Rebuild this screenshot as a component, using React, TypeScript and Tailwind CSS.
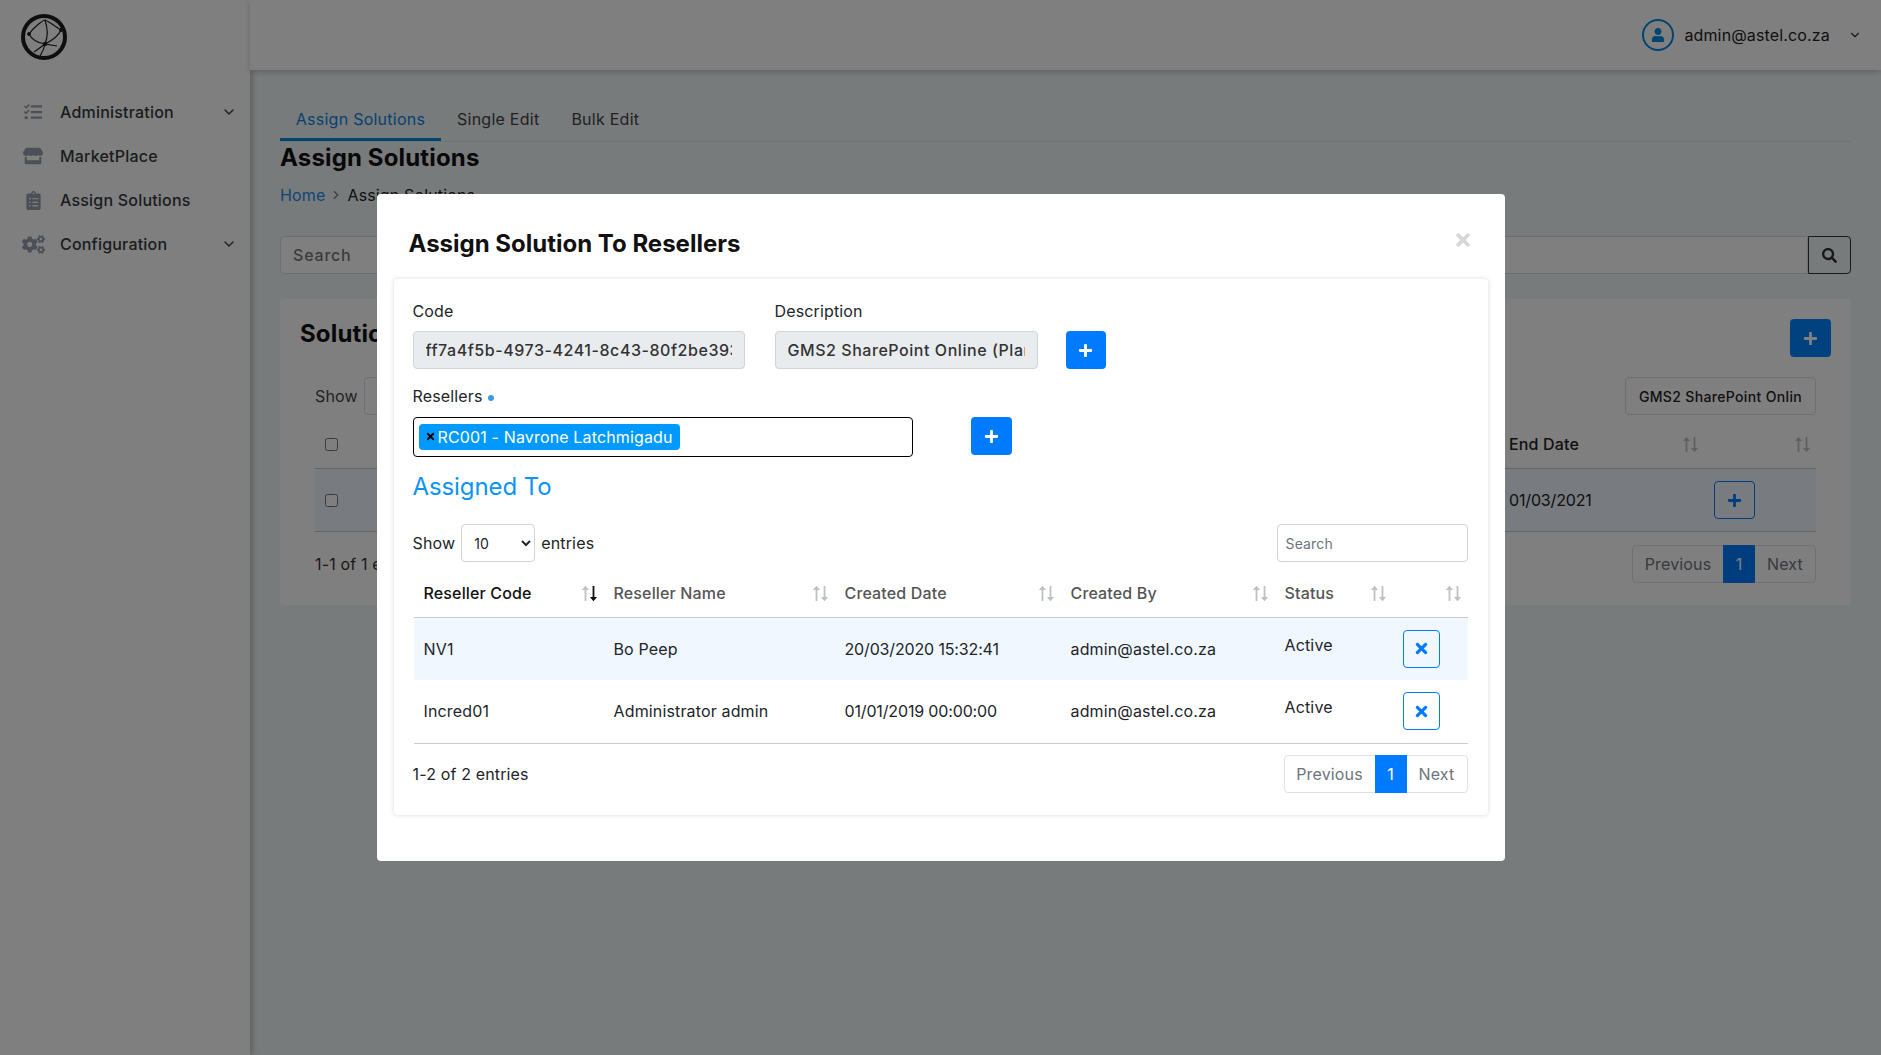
import { ChevronDown, ChevronRight } from 'lucide-react'
import { FaClipboardList, FaCogs, FaPlus, FaSearch, FaStore, FaTasks, FaTimes, FaUser } from 'react-icons/fa'

const navItems = [
  { label: 'Administration', icon: FaTasks, size: 'text-[18px]', caret: true },
  { label: 'MarketPlace', icon: FaStore, size: 'text-[20px]', caret: false },
  { label: 'Assign Solutions', icon: FaClipboardList, size: 'text-[19px]', caret: false },
  { label: 'Configuration', icon: FaCogs, size: 'text-[23px]', caret: true },
]

const rows = [
  { code: 'NV1', name: 'Bo Peep', date: '20/03/2020 15:32:41', by: 'admin@astel.co.za', status: 'Active', hl: true },
  { code: 'Incred01', name: 'Administrator admin', date: '01/01/2019 00:00:00', by: 'admin@astel.co.za', status: 'Active', hl: false },
]

const columns = [
  { label: 'Reseller Code', width: 'w-[190px]' },
  { label: 'Reseller Name', width: 'w-[231px]' },
  { label: 'Created Date', width: 'w-[226px]' },
  { label: 'Created By', width: 'w-[214px]' },
  { label: 'Status', width: 'w-[118px]' },
  { label: '', width: 'w-[75px]' },
]

function SortArrows({ active = false }: { active?: boolean }) {
  const down = active ? '#111' : '#bcc1c5'
  return (
    <svg width="17" height="17" viewBox="0 0 17 17" className="shrink-0">
      <path d="M3.6 16V5H.9L4.5 .8 8.100 5H5.400v11z" fill="#bcc1c5" />
      <path d="M11.600 1v11H8.900l3.600 4.200L16.100 12h-2.700V1z" fill={down} />
    </svg>
  )
}

function Logo() {
  return (
    <svg width="48" height="48" viewBox="0 0 48 48" fill="none" stroke="#1c1c1c">
      <circle cx="24" cy="24" r="21" strokeWidth="4" />
      <path d="M9 21 C 14 14, 22 8, 25 7 C 30 9, 36 14, 41 17 M25 7 C 28 16, 28 24, 25 31 M9 21 C 12 27, 18 30, 25 31 M25 31 C 31 28, 38 24, 41 17 M25 31 L37 33 M25 31 C 21 34, 17 37, 14 39 M25 31 C 24 36, 22 40, 20 43" strokeWidth="1.2" />
      <circle cx="25" cy="31" r="1.8" fill="#1c1c1c" />
      <circle cx="9" cy="21" r="1.4" fill="#1c1c1c" />
      <circle cx="41" cy="17" r="1.4" fill="#1c1c1c" />
    </svg>
  )
}

function Pager() {
  return (
    <div className="flex h-[38px] items-stretch rounded border border-[#dee2e6] text-[#6c757d]">
      <span className="flex w-[90px] items-center justify-center">Previous</span>
      <span className="-my-px flex w-[32px] items-center justify-center bg-[#007bff] text-white">1</span>
      <span className="flex w-[60px] items-center justify-center">Next</span>
    </div>
  )
}

function Background() {
  return (
    <div className="flex h-[1055px] w-[1881px] overflow-hidden bg-[#f1f6f7]">
      <aside className="w-[250px] shrink-0 bg-white shadow-[2px_0_6px_rgba(0,0,0,0.25)]">
        <div className="h-[90px] pl-[20px] pt-[13px]">
          <Logo />
        </div>
        <nav>
          {navItems.map((item) => (
            <div key={item.label} className="flex h-[44px] items-center pr-[13px] text-[#343a40]">
              <span className="flex w-[60px] justify-center pl-[18px] pr-[12px]">
                <item.icon className={`${item.size} shrink-0 text-[#94a1ad]`} />
              </span>
              <span className="flex-1 font-medium tracking-[0.2px]">{item.label}</span>
              {item.caret && <ChevronDown size={16} strokeWidth={2} className="text-[#343a40]" />}
            </div>
          ))}
        </nav>
      </aside>

      <div className="flex min-w-0 flex-1 flex-col">
        <header className="flex h-[70px] shrink-0 items-center justify-end bg-white pr-[19px] shadow-[0_2px_6px_rgba(0,0,0,0.2)]">
          <span className="flex h-[32px] w-[32px] items-center justify-center rounded-full border-2 border-[#0088e0] text-[#0088e0]">
            <FaUser className="text-[14px]" />
          </span>
          <span className="ml-[10px] text-[#222]">admin@astel.co.za</span>
          <ChevronDown size={14} className="ml-[18px] text-[#333]" />
        </header>

        <main className="pl-[30px] pr-[30px] pt-[30px]">
          <div className="flex h-[42px] border-b border-[#dfe4e8] tracking-[0.25px]">
            <span className="flex w-[161px] items-center justify-center border-b-[3px] border-[#0088e0] text-[#0b84e0]">Assign Solutions</span>
            <span className="ml-[16px] flex items-center pb-[3px] text-[#444]">Single Edit</span>
            <span className="ml-[32px] flex items-center pb-[3px] text-[#444]">Bulk Edit</span>
          </div>
          <h1 className="mt-[1px] text-[24px] font-bold leading-[30px] text-[#111]">Assign Solutions</h1>
          <div className="mt-[11px] flex items-center leading-[22px]">
            <span className="text-[#1a8cef]">Home</span>
            <ChevronRight size={14} className="mx-[4px] text-[#777]" />
            <span className="text-[#222]">Assign Solutions</span>
          </div>

          <div className="mt-[30px] flex h-[38px]">
            <div className="flex flex-1 items-center rounded-l border border-[#d8dde1] bg-white pl-[12px] font-medium tracking-[0.8px] text-[#777]">Search</div>
            <div className="flex w-[43px] items-center justify-center rounded-r border border-[#333] text-[#333]">
              <FaSearch className="text-[15px]" />
            </div>
          </div>

          <section className="mt-[25px] h-[306px] rounded bg-white px-[20px] pt-[20px]">
            <div className="flex h-[38px] items-start justify-between">
              <h2 className="-mt-px text-[24px] font-bold leading-[32px] text-[#111]">Solutions</h2>
              <span className="flex h-[38px] w-[41px] items-center justify-center rounded bg-[#0085ff] text-white">
                <FaPlus className="text-[15px]" />
              </span>
            </div>
            <div className="mt-[20px] flex h-[38px] items-center justify-between pl-[15px] pr-[15px] text-[#444]">
              <div className="flex items-center gap-[6px]">
                Show
                <span className="h-[38px] w-[60px] rounded border border-[#d8dde1]" />
              </div>
              <span className="flex h-[38px] w-[191px] items-center justify-center rounded border border-[#d8dde1] text-[14px] font-medium tracking-[0.35px] text-[#222]">GMS2 SharePoint Onlin</span>
            </div>
            <div className="ml-[15px] mr-[15px] flex h-[54px] items-center border-b border-[#c6ccd2] pl-[10px] pt-[5px]">
              <input type="checkbox" readOnly className="h-[13px] w-[13px]" />
              <span className="ml-[1171px] w-[173px] font-medium text-[#222]">End Date</span>
              <SortArrows />
              <span className="ml-[95px]">
                <SortArrows />
              </span>
            </div>
            <div className="ml-[15px] mr-[15px] flex h-[63px] items-center border-b border-[#c6ccd2] bg-[#f0f7ff] pl-[10px]">
              <input type="checkbox" readOnly className="h-[13px] w-[13px]" />
              <span className="ml-[1171px] w-[205px] tracking-[-0.15px] text-[#222]">01/03/2021</span>
              <span className="flex h-[38px] w-[41px] items-center justify-center rounded border border-[#007bff] text-[#007bff]">
                <FaPlus className="text-[15px]" />
              </span>
            </div>
            <div className="mt-[13px] flex items-center justify-between pl-[15px] pr-[15px]">
              <span className="text-[#333]">1-1 of 1 entries</span>
              <Pager />
            </div>
          </section>
        </main>
      </div>
    </div>
  )
}

function Modal() {
  return (
    <div className="fixed inset-0 bg-black/50">
      <div className="mx-auto mt-[194px] h-[667px] w-[1128px] rounded-[4px] bg-white pl-[17px] pr-[17px] text-[#212529]">
        <div className="flex h-[85px] items-start justify-between pl-[15px] pr-[15px] pt-[34px]">
          <h2 className="text-[24px] font-bold leading-[32px] tracking-normal text-[#111]">Assign Solution To Resellers</h2>
          <FaTimes className="mt-[2px] text-[20px] text-[#d5d7d9]" />
        </div>
        <div className="h-[536px] rounded-[4px] bg-white pl-[19px] pr-[20px] pt-[22px] shadow-[0_0_5px_rgba(0,0,0,0.15)]">
          <div className="flex items-end">
            <label className="w-[332px]">
              <span className="mb-[10px] block leading-[20px]">Code</span>
              <input disabled value="ff7a4f5b-4973-4241-8c43-80f2be393a1f" readOnly className="h-[38px] w-full rounded border border-[#ced4da] bg-[#e9ecef] px-[12px] font-medium tracking-[0.55px] text-[#333]" />
            </label>
            <label className="ml-[30px] w-[263px]">
              <span className="mb-[10px] block leading-[20px]">Description</span>
              <input disabled value="GMS2 SharePoint Online (Plan 2)" readOnly className="h-[38px] w-full rounded border border-[#ced4da] bg-[#e9ecef] px-[12px] font-medium tracking-[0.55px] text-[#333]" />
            </label>
            <button className="ml-[28px] flex h-[38px] w-[40px] items-center justify-center rounded bg-[#007bff] text-white">
              <FaPlus className="text-[15px]" />
            </button>
          </div>

          <div className="mt-[17px] flex items-center leading-[20px]">
            Resellers
            <span className="ml-[5px] mt-[3px] h-[6px] w-[6px] rounded-full bg-[#3a9be0]" />
          </div>
          <div className="mt-[11px] flex items-start">
            <div className="flex h-[40px] w-[500px] items-center rounded border border-black pb-[1px] pl-[5px]">
              <span className="flex h-[26px] items-center rounded bg-[#0099ff] pl-[6px] pr-[7px] text-white">
                <FaTimes className="mr-[2px] text-[11px] text-black" />
                RC001 - Navrone Latchmigadu
              </span>
            </div>
            <button className="ml-[58px] flex h-[38px] w-[41px] items-center justify-center rounded bg-[#007bff] text-white">
              <FaPlus className="text-[15px]" />
            </button>
          </div>

          <h3 className="mt-[14px] text-[24px] font-normal leading-[32px] tracking-[-0.1px] text-[#0b93f6]">Assigned To</h3>

          <div className="mt-[21px] flex h-[38px] items-center justify-between">
            <div className="flex items-center">
              Show
              <select className="ml-[6px] h-[38px] w-[74px] rounded border border-[#ced4da] bg-white pl-[8px] text-[14px]">
                <option>10</option>
              </select>
              <span className="ml-[6px]">entries</span>
            </div>
            <input placeholder="Search" className="h-[38px] w-[191px] rounded border border-[#ced4da] px-[8px] text-[14px] placeholder:text-[#6c757d]" />
          </div>

          <table className="ml-[1px] mt-[8px] w-[1054px] table-fixed border-collapse">
            <thead>
              <tr className="h-[47px] border-b border-[#c6ccd2]">
                {columns.map((col, i) => (
                  <th key={col.label} className={`${col.width} pl-[10px] pr-[6px] text-left font-medium ${i === 0 ? 'text-[#111]' : 'text-[#555]'}`}>
                    <span className="flex items-center justify-between">
                      {col.label}
                      {i === 5 && <span />}
                      <SortArrows active={i === 0} />
                    </span>
                  </th>
                ))}
              </tr>
            </thead>
            <tbody>
              {rows.map((row) => (
                <tr key={row.code} className={`h-[63px] ${row.hl ? 'bg-[#f0f7ff]' : 'border-b border-[#c6ccd2]'}`}>
                  <td className="px-[10px]">{row.code}</td>
                  <td className="px-[10px]">{row.name}</td>
                  <td className="px-[10px] tracking-[-0.15px]">{row.date}</td>
                  <td className="px-[10px]">{row.by}</td>
                  <td className="px-[10px] pb-[8px]">{row.status}</td>
                  <td className="px-[10px]">
                    <button className="flex h-[38px] w-[37px] items-center justify-center rounded border border-[#007bff] text-[#007bff]">
                      <FaTimes className="text-[17px]" />
                    </button>
                  </td>
                </tr>
              ))}
            </tbody>
          </table>

          <div className="mt-[11px] flex items-center justify-between">
            <span>1-2 of 2 entries</span>
            <Pager />
          </div>
        </div>
      </div>
    </div>
  )
}

export default function App() {
  return (
    <div className="relative h-[1055px] overflow-hidden font-['Inter',sans-serif] text-[16px] tracking-[0.15px]">
      <Background />
      <Modal />
    </div>
  )
}
